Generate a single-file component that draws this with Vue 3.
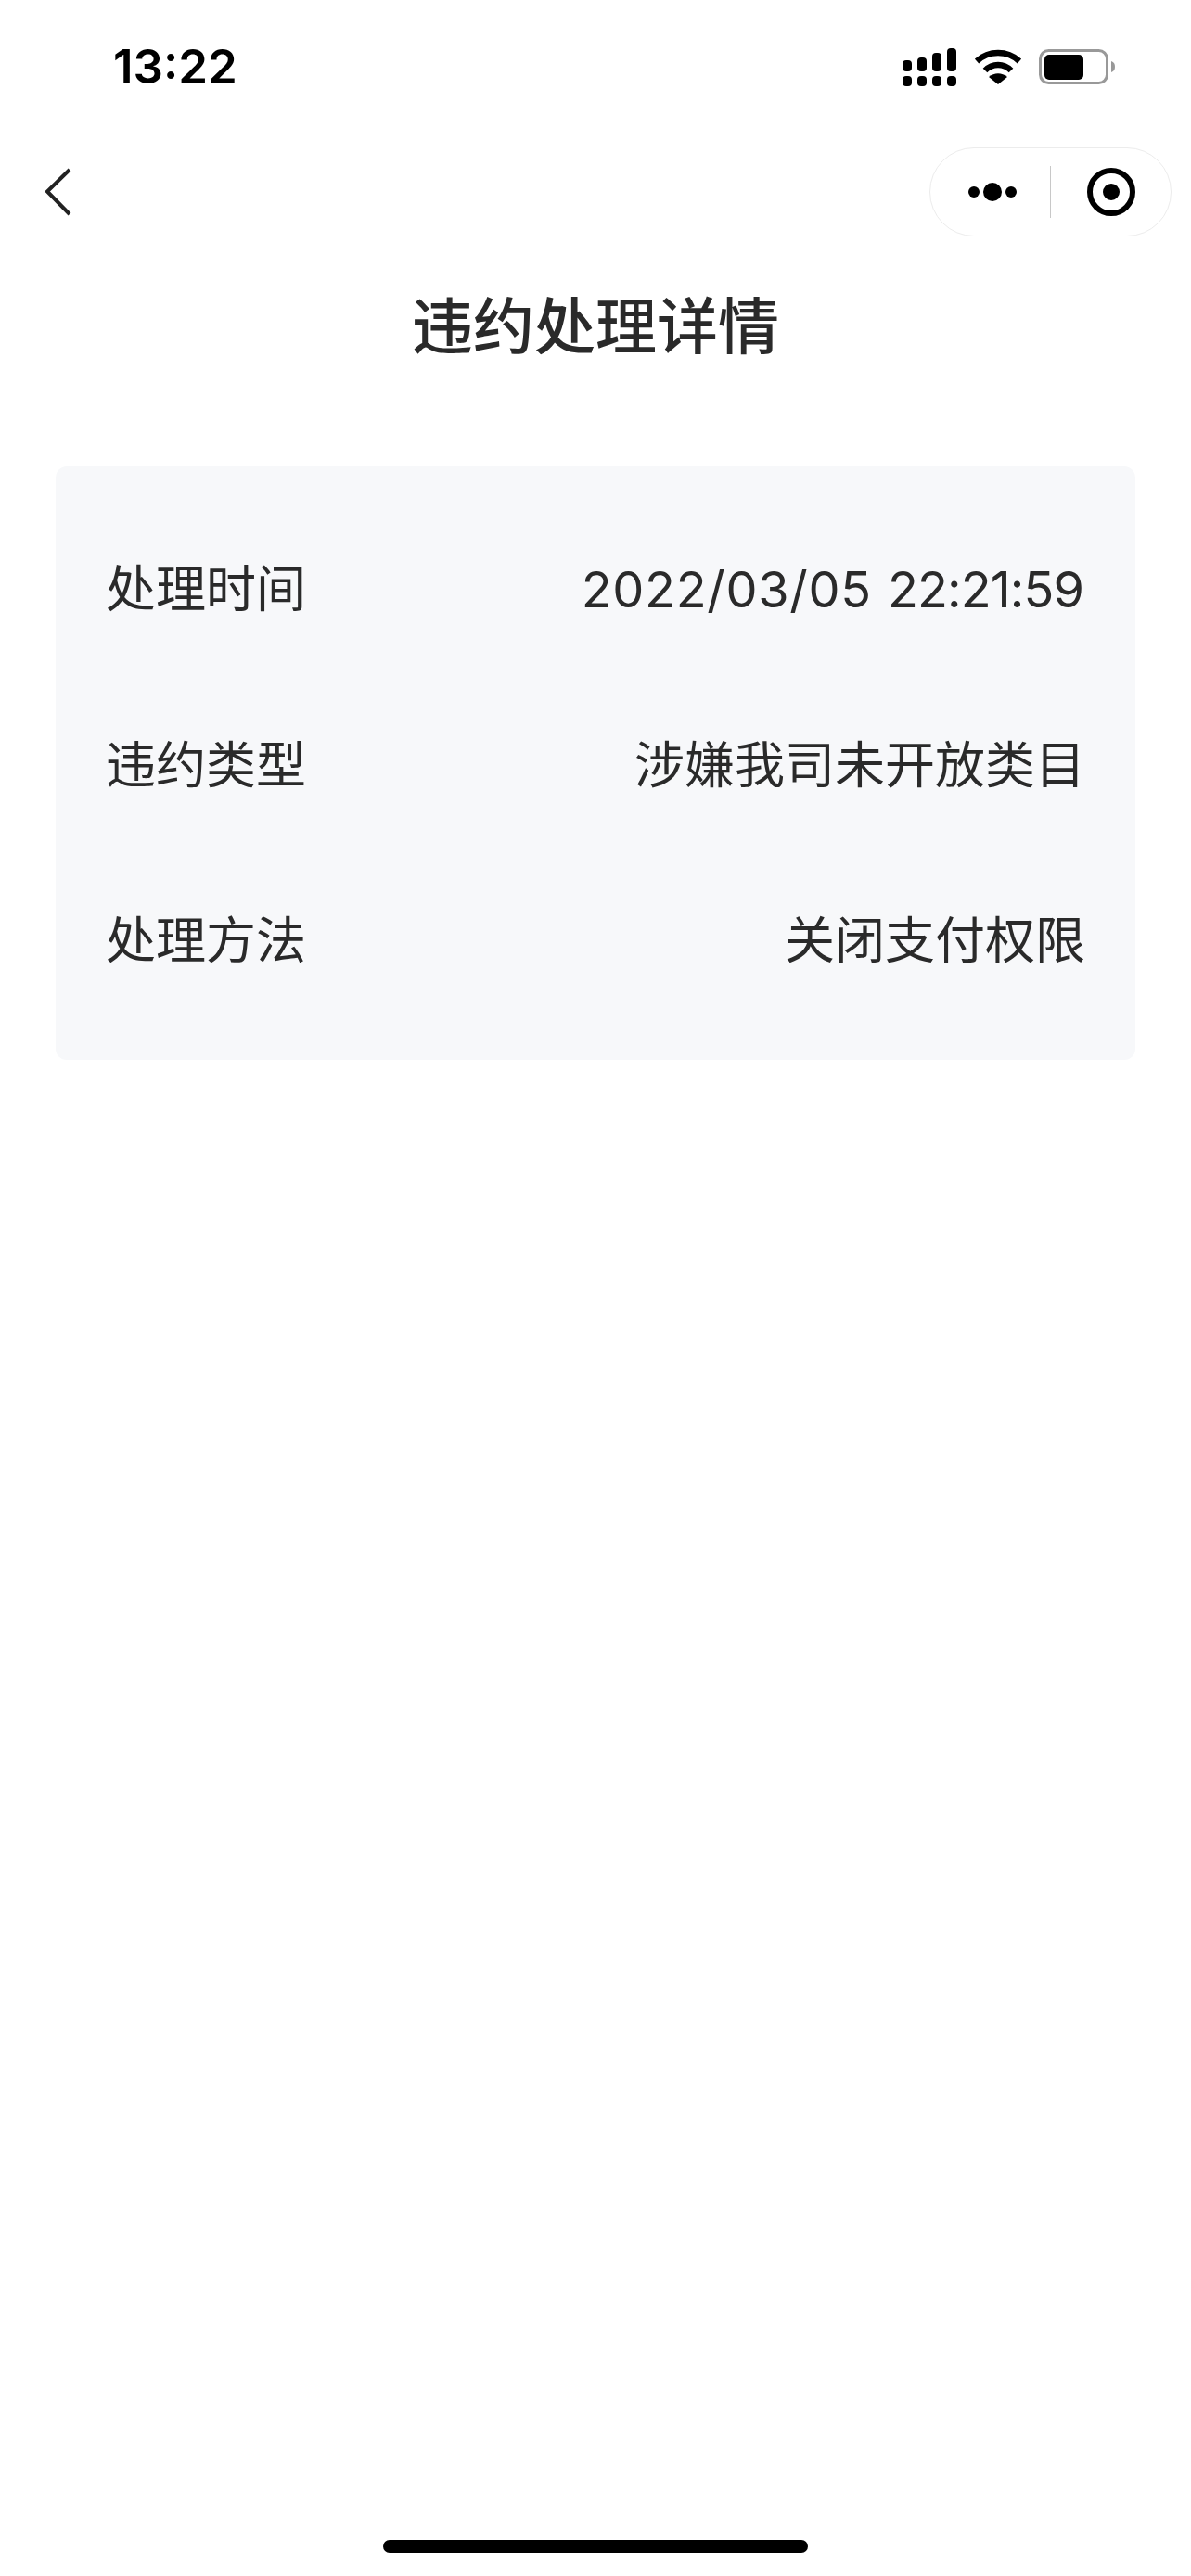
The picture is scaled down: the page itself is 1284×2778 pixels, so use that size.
<template>
  <div class="pagina">
    <div class="barra-estado">
      <span class="hora">13:22</span>
      <div class="iconos-estado">
        <svg class="icono-senal" width="58" height="41" viewBox="0 0 58 41" fill="#000">
          <rect x="0" y="13" width="10" height="12" rx="4" />
          <rect x="16" y="10" width="10" height="15" rx="4" />
          <rect x="32" y="5" width="10" height="20" rx="4" />
          <rect x="48" y="0" width="10" height="25" rx="4" />
          <rect x="0" y="30" width="10" height="11" rx="4" />
          <rect x="16" y="30" width="10" height="11" rx="4" />
          <rect x="32" y="30" width="10" height="11" rx="4" />
          <rect x="48" y="30" width="10" height="11" rx="4" />
        </svg>
        <svg class="icono-wifi" width="50" height="38" viewBox="0 0 50 38" fill="none" stroke="#000" stroke-width="6.5">
          <path d="M2 13 C15 1 35 1 48 13" />
          <path d="M11 23 C19 15 31 15 39 23" />
          <path d="M25 38 L15 30 C21 25 29 25 35 30 Z" fill="#000" stroke="none" />
        </svg>
        <svg class="icono-bateria" width="82" height="38" viewBox="0 0 82 38">
          <rect x="1.5" y="1.5" width="72" height="35" rx="9" fill="none" stroke="#999" stroke-width="3" />
          <rect x="6" y="6" width="42" height="27" rx="5" fill="#000" />
          <path d="M78 13 C81 14 82 16 82 19 C82 22 81 24 78 25 Z" fill="#999" />
        </svg>
      </div>
    </div>

    <div class="barra-nav">
      <svg class="icono-volver" width="30" height="52" viewBox="0 0 30 52" fill="none" stroke="#222" stroke-width="4">
        <path d="M27 2 L3 25.5 L27 50" />
      </svg>
      <div class="capsula">
        <div class="capsula-mas">
          <span class="punto"></span>
          <span class="punto punto-grande"></span>
          <span class="punto"></span>
        </div>
        <div class="capsula-linea"></div>
        <svg class="icono-objetivo" width="52" height="52" viewBox="0 0 52 52">
          <circle cx="26" cy="26" r="23" fill="none" stroke="#000" stroke-width="6" />
          <circle cx="26" cy="26" r="9" fill="#000" />
        </svg>
      </div>
    </div>

    <h1 class="titulo">违约处理详情</h1>

    <div class="tarjeta">
      <div class="fila">
        <span>处理时间</span>
        <span><span class="fecha">2022/03/05</span> <span class="tiempo">22:21:59</span></span>
      </div>
      <div v-for="fila in filas" :key="fila.nombre" class="fila">
        <span>{{ fila.nombre }}</span>
        <span>{{ fila.valor }}</span>
      </div>
    </div>

    <div class="barra-inicio"></div>
  </div>
</template>

<script setup>
const filas = [
  { nombre: '违约类型', valor: '涉嫌我司未开放类目' },
  { nombre: '处理方法', valor: '关闭支付权限' }
];
</script>

<style>
html,
body {
  margin: 0;
  background: #fff;
}
</style>

<style scoped>
.pagina {
  display: flex;
  flex-direction: column;
  box-sizing: border-box;
  width: 1284px;
  height: 2778px;
  overflow: hidden;
  background: #fff;
  color: #2a2a2a;
  font-family: "Inter", "Noto Sans CJK SC", sans-serif;
}

.barra-estado {
  display: flex;
  justify-content: space-between;
  align-items: flex-start;
  height: 159px;
  padding: 0 82px 0 122px;
  box-sizing: border-box;
}

.hora {
  margin-top: 40px;
  font-size: 51px;
  line-height: 64px;
  font-weight: 600;
  color: #000;
}

.iconos-estado {
  display: flex;
  align-items: flex-start;
  margin-top: 52px;
}

.icono-wifi {
  margin: 1px 0 0 20px;
}

.icono-bateria {
  margin: 1px 0 0 19px;
}

.barra-nav {
  display: flex;
  justify-content: space-between;
  align-items: center;
  height: 96px;
  padding: 0 21px 0 48px;
}

.capsula {
  display: flex;
  align-items: center;
  box-sizing: border-box;
  width: 261px;
  height: 96px;
  padding-left: 41px;
  border: 1.5px solid #ececec;
  border-radius: 48px;
}

.capsula-mas {
  display: flex;
  align-items: center;
  gap: 4px;
}

.punto {
  width: 12px;
  height: 12px;
  border-radius: 50%;
  background: #000;
}

.punto-grande {
  width: 20px;
  height: 20px;
}

.capsula-linea {
  width: 1px;
  height: 56px;
  margin: 0 39px 0 36px;
  background: #c8c8c8;
}

.titulo {
  margin: 52px 0 106px;
  font-size: 66px;
  line-height: 90px;
  font-weight: 500;
  text-align: center;
}

.tarjeta {
  display: flex;
  flex-direction: column;
  gap: 99.5px;
  margin: 0 60px;
  padding: 88px 54px 83px 54px;
  background: #f7f8fa;
  border-radius: 12px;
}

.fila {
  display: flex;
  justify-content: space-between;
  font-size: 54px;
  line-height: 90px;
}

.fecha {
  letter-spacing: 0.7px;
}

.tiempo {
  margin: 0 2px;
  letter-spacing: -0.9px;
}

.barra-inicio {
  align-self: center;
  width: 458px;
  height: 14px;
  margin-top: auto;
  margin-bottom: 25px;
  border-radius: 7px;
  background: #000;
}
</style>
